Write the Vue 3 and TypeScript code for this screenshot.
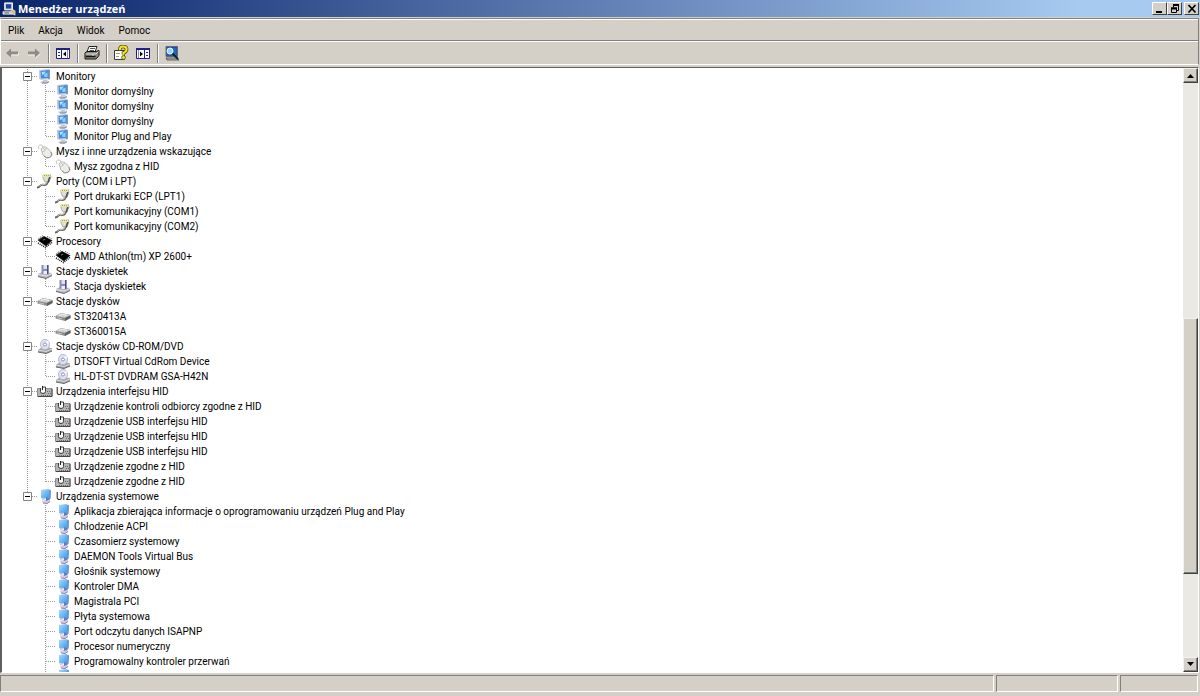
<script setup lang="ts">
import { computed } from 'vue'

type IconName = 'monitor' | 'mouse' | 'port' | 'cpu' | 'floppy' | 'disk' | 'cdrom' | 'hid' | 'system'

interface Category {
  label: string
  icon: IconName
  devices: string[]
  continues?: boolean
}

interface Row {
  label: string
  icon: IconName
  level: number
  rootLine: boolean
  rootEnd: boolean
  lastChild: boolean
}

const categories: Category[] = [
  { label: 'Monitory', icon: 'monitor', devices: ['Monitor domyślny', 'Monitor domyślny', 'Monitor domyślny', 'Monitor Plug and Play'] },
  { label: 'Mysz i inne urządzenia wskazujące', icon: 'mouse', devices: ['Mysz zgodna z HID'] },
  { label: 'Porty (COM i LPT)', icon: 'port', devices: ['Port drukarki ECP (LPT1)', 'Port komunikacyjny (COM1)', 'Port komunikacyjny (COM2)'] },
  { label: 'Procesory', icon: 'cpu', devices: ['AMD Athlon(tm) XP 2600+'] },
  { label: 'Stacje dyskietek', icon: 'floppy', devices: ['Stacja dyskietek'] },
  { label: 'Stacje dysków', icon: 'disk', devices: ['ST320413A', 'ST360015A'] },
  { label: 'Stacje dysków CD-ROM/DVD', icon: 'cdrom', devices: ['DTSOFT Virtual CdRom Device', 'HL-DT-ST DVDRAM GSA-H42N'] },
  {
    label: 'Urządzenia interfejsu HID',
    icon: 'hid',
    devices: [
      'Urządzenie kontroli odbiorcy zgodne z HID',
      'Urządzenie USB interfejsu HID',
      'Urządzenie USB interfejsu HID',
      'Urządzenie USB interfejsu HID',
      'Urządzenie zgodne z HID',
      'Urządzenie zgodne z HID',
    ],
  },
  {
    label: 'Urządzenia systemowe',
    icon: 'system',
    devices: [
      'Aplikacja zbierająca informacje o oprogramowaniu urządzeń Plug and Play',
      'Chłodzenie ACPI',
      'Czasomierz systemowy',
      'DAEMON Tools Virtual Bus',
      'Głośnik systemowy',
      'Kontroler DMA',
      'Magistrala PCI',
      'Płyta systemowa',
      'Port odczytu danych ISAPNP',
      'Procesor numeryczny',
      'Programowalny kontroler przerwań',
      '',
    ],
    continues: true,
  },
]

const rows = computed<Row[]>(() =>
  categories.flatMap((c, ci) => {
    const isLast = ci === categories.length - 1
    return [
      { label: c.label, icon: c.icon, level: 1, rootLine: true, rootEnd: isLast, lastChild: false },
      ...c.devices.map((d, di) => ({
        label: d,
        icon: c.icon,
        level: 2,
        rootLine: !isLast,
        rootEnd: false,
        lastChild: di === c.devices.length - 1 && !c.continues,
      })),
    ]
  }),
)

const menus = ['Plik', 'Akcja', 'Widok', 'Pomoc']
</script>

<template>
  <div class="window">
    <svg class="defs" aria-hidden="true">
      <defs>
        <linearGradient id="screen" x1="0" y1="0" x2="1" y2="1">
          <stop offset="0" stop-color="#a4dcff" />
          <stop offset="1" stop-color="#3c9cf0" />
        </linearGradient>
        <symbol id="i-monitor" viewBox="0 0 16 15">
          <path d="M2 1 L11 0 L13 1 L13 10 L4 11 L2 10Z" fill="#c6cedb" />
          <path d="M11 0.500 L13 1 L13 10 L11 10.500Z" fill="#8698b5" />
          <path d="M3.500 2 L11.500 1 L11.500 9 L4 9.500Z" fill="#3d8ee2" />
          <path d="M4.500 3 L9 2.500 L5.500 6.500Z" fill="#b6e2ff" />
          <path d="M7 5 L10.500 3.500 L10.500 8 L7.500 8Z" fill="#8fcdf8" />
          <path d="M6 11 L10.500 10.500 L10.500 12 L12 13 L10 14.500 L5 14.500 L3 13 L6 12Z" fill="#c5c8d0" />
          <path d="M5 14 H10 L12 12.500" stroke="#7d8496" fill="none" />
        </symbol>
        <symbol id="i-system" viewBox="0 0 16 15">
          <path d="M4 1 L11 0 L14 1 L13.500 9 L6 10 L4 9Z" fill="#a3c6e4" />
          <path d="M4 1.500 L12 0.500 L12 8.500 L4.500 9Z" fill="url(#screen)" />
          <path d="M12 1 L14 1.500 L13.500 10 L12 9Z" fill="#6e94cc" />
          <path d="M9 8 L13 9 L12 12.500 L9 12Z" fill="#5f80bc" />
          <path d="M4.500 11.500 Q8 13 12 11 L13 13 L10 15 L6 14Z" fill="#d3cae4" />
          <path d="M6 14 L10 14.500 L13 12.500" stroke="#9482b8" fill="none" />
          <path d="M5 10.500 L9 11.500" stroke="#dab4c8" fill="none" />
        </symbol>
        <symbol id="i-mouse" viewBox="0 0 16 15">
          <path d="M2 5 Q0 1 4 1 Q6 1 6 3" stroke="#c2c2be" fill="none" />
          <path d="M4 5 Q5 2 9 3 L13 6.500 Q17 11 13 13.500 Q9 15 6 11Z" fill="#ecece8" stroke="#bcbcb7" />
          <path d="M14 8 Q16 11.500 12.500 13.500 Q9.500 15 7 12" stroke="#8d8d89" fill="none" />
          <path d="M5 8 Q8 8 9.500 4 M6 4 L8 6" stroke="#c6c6c0" fill="none" />
        </symbol>
        <symbol id="i-port" viewBox="0 0 16 15">
          <path d="M6 1 L13 0 L14 3 L12 8 L8 8 L6 4Z" fill="#deded5" stroke="#9c9c94" stroke-width=".8" />
          <path d="M5 2.500 L6 0 L13 0 L13.500 2.500 L6 3Z" fill="#e9e7a0" />
          <path d="M7 1.500 H13" stroke="#a4a26c" stroke-dasharray="1 1" />
          <path d="M12 3 L13.500 3 L12 8.500 L10 9Z" fill="#4c4c48" />
          <path d="M10.500 8 Q10 11 7 11 Q4 10.500 3 12 Q2 13.500 0 13.500" stroke="#66665f" stroke-width="2" fill="none" />
          <path d="M10 8 Q9.500 10.500 7 10.500 Q4 10 2.500 12" stroke="#cfcfc6" stroke-width=".9" fill="none" />
        </symbol>
        <symbol id="i-cpu" viewBox="0 0 16 15">
          <path d="M0.500 6 L7 2 L15.500 6.500 L9 12.500Z" fill="#222" />
          <path d="M1 9 L8.500 13.500 L15 8.500" stroke="#111" stroke-width="1.500" stroke-dasharray="1 1" fill="none" />
          <path d="M1.500 4.500 L6 1.500 M10 2.500 L15 5" stroke="#444" stroke-dasharray="1 1" fill="none" />
          <path d="M2 7 L7.500 3 L14 6.500 L9 11Z" fill="#000" />
          <path d="M5.500 6 L7.500 4.700 L8.500 5.200 L6.500 6.600Z" fill="#777" />
        </symbol>
        <symbol id="i-floppy" viewBox="0 0 16 15">
          <path d="M1 10 L5 8 L15 9 L15 11.500 L9 14.500 L1 12.500Z" fill="#b4b4bc" />
          <path d="M1 10.500 L9 12 L15 9.500" stroke="#e5e5ea" fill="none" />
          <path d="M1 12.500 L9 14.500 L15 11.500" stroke="#6c6c74" fill="none" />
          <path d="M4.500 1 H12 V10.500 L4.500 9.500Z" fill="#8c8cbc" />
          <path d="M6.500 1 H10 V5 H6.500Z" fill="#e0e0f0" />
          <path d="M10 1 H11 V10 H10Z" fill="#50507c" />
          <path d="M6.500 7 H10 V10 H6.500Z" fill="#eeeef8" />
        </symbol>
        <symbol id="i-disk" viewBox="0 0 16 15">
          <path d="M0.500 7 L6 4 L15.500 6 V9 L10 12 L0.500 9.500Z" fill="#8c8c8c" />
          <path d="M1 7 L6 4.300 L15 6.300 L10 8.800Z" fill="#d0d0d0" />
          <path d="M4 6.500 L7 5.200 L12 6.400" stroke="#f0f0f0" fill="none" />
          <path d="M10 9 L15.500 6.500 V9 L10 12Z" fill="#606060" />
          <path d="M2 8.800 L7 10" stroke="#c4c4c4" />
        </symbol>
        <symbol id="i-cdrom" viewBox="0 0 16 15">
          <path d="M1 11 L5 8 L15 9 V12 L9 14.500 L1 13Z" fill="#a6a6a6" />
          <path d="M1 11 L9 12.500 L15 10" stroke="#dcdcdc" fill="none" />
          <path d="M1 13 L9 14.500 L15 12" stroke="#686868" fill="none" />
          <ellipse cx="8" cy="5.500" rx="4.500" ry="5.200" fill="#e0e0f4" stroke="#a8a8c4" stroke-width=".8" />
          <path d="M8 5.500 L11 1.500 L12 4Z" fill="#fff" />
          <path d="M8 5.500 L4.500 8 L5.500 10Z" fill="#c6d9ee" />
          <circle cx="8" cy="5.500" r="1.500" fill="#fff" stroke="#8080a8" stroke-width=".8" />
        </symbol>
        <symbol id="i-hid" viewBox="0 0 16 15">
          <path d="M0.500 4.500 H15 V12.500 H0.500Z" fill="#b4b4b4" stroke="#8c8c8c" />
          <path d="M1 12.500 H15 V5" stroke="#484848" fill="none" />
          <path d="M3.500 4 V7.500 Q3.500 9.500 6 9.500 Q8.500 9.500 8.500 7.500 V3 H5" fill="#f4f4f4" stroke="#3c3c3c" />
          <path d="M5.500 2 V6" stroke="#222" />
          <path d="M10 7.500 H14 M11 9.500 H14 M4 11.500 H14" stroke="#6c6c6c" stroke-dasharray="1 1" />
        </symbol>
      </defs>
    </svg>

    <header class="titlebar">
      <svg class="app-icon" viewBox="0 0 16 16" aria-hidden="true">
        <path d="M3 1 H12 V9 H3Z" fill="#d4d0c8" stroke="#fff" />
        <path d="M4.500 2.500 H10.500 V7.500 H4.500Z" fill="#1746a8" />
        <path d="M1 11 H12 V14 H1Z" fill="#d4d0c8" stroke="#fff" stroke-width=".6" />
        <path d="M3 12.500 H8" stroke="#555" />
        <path d="M11 8 L15 10 V15 L10 13Z" fill="#c7c58f" stroke="#eee" stroke-width=".6" />
      </svg>
      <h1>Menedżer urządzeń</h1>
      <div class="captions">
        <button type="button" class="cap" aria-label="Minimalizuj">
          <svg viewBox="0 0 12 10"><path d="M2 8 H8" stroke="#000" stroke-width="2" /></svg>
        </button>
        <button type="button" class="cap" aria-label="Przywróć">
          <svg viewBox="0 0 12 10">
            <path d="M4.500 1 V3.500 M4 1.500 H10 M9.500 1 V6.500 H8" stroke="#000" fill="none" />
            <path d="M4 1 H10" stroke="#000" stroke-width="2" />
            <path d="M2.500 4.500 H7.500 V8.500 H2.500Z M2 4 H8" stroke="#000" fill="none" />
            <path d="M2 4.500 H8" stroke="#000" stroke-width="2" />
          </svg>
        </button>
        <button type="button" class="cap close" aria-label="Zamknij">
          <svg viewBox="0 0 12 10"><path d="M2.500 1 L9.500 8.500 M9.500 1 L2.500 8.500" stroke="#000" stroke-width="1.700" /></svg>
        </button>
      </div>
    </header>

    <div class="bars">
      <nav class="menubar" aria-label="Menu">
        <button v-for="m in menus" :key="m" type="button">{{ m }}</button>
      </nav>
      <div class="toolbar" role="toolbar" aria-label="Pasek narzędzi">
        <button type="button" aria-label="Wstecz">
          <svg viewBox="0 0 16 16"><path d="M2 8 L7 3.500 V6.500 H14 V9.500 H7 V12.500Z" fill="#8e8b84" /><path d="M7.500 10 H14.500 V8" stroke="#f3f1ec" fill="none" /></svg>
        </button>
        <button type="button" aria-label="Dalej">
          <svg viewBox="0 0 16 16"><path d="M14 8 L9 3.500 V6.500 H2 V9.500 H9 V12.500Z" fill="#8e8b84" /><path d="M2 10 H8.500 M9.500 13 L14.500 8.500" stroke="#f3f1ec" fill="none" /></svg>
        </button>
        <span class="sep"></span>
        <button type="button" aria-label="Pokaż lub ukryj drzewo konsoli">
          <svg viewBox="0 0 16 16">
            <path d="M1.500 3.500 H14.500 V13.500 H1.500Z" fill="#fff" stroke="#20208a" />
            <path d="M1 4 H15" stroke="#20208a" stroke-width="2" />
            <path d="M6.500 5 V13" stroke="#20208a" />
            <path d="M3 7.500 H5 M3 10.500 H5" stroke="#20208a" />
            <path d="M8 9 L11 6.500 V11.500Z" fill="#000" />
            <path d="M12.500 5 V13" stroke="#8888c4" />
          </svg>
        </button>
        <span class="sep"></span>
        <button type="button" aria-label="Drukuj">
          <svg viewBox="0 0 16 16">
            <path d="M5 1.500 H13 L11 7 H3Z" fill="#fff" stroke="#222" />
            <path d="M6 3.500 H11 M5.500 5.500 H10" stroke="#555" />
            <path d="M1 8 L3 6.500 H12 L15 5.500 V10.500 L12 14 H1Z" fill="#8b8980" stroke="#111" />
            <path d="M1.500 9 H12 L14.500 6.500" stroke="#dedbd2" fill="none" />
            <path d="M2 11.500 H11.500" stroke="#111" stroke-width="1.500" />
            <path d="M8 10 H10" stroke="#dedbd2" />
          </svg>
        </button>
        <span class="sep"></span>
        <button type="button" aria-label="Pomoc">
          <svg viewBox="0 0 16 16">
            <path d="M1.500 5.500 H11.500 V14.500 H1.500Z" fill="#fff" stroke="#3a3a3a" />
            <path d="M3 8.500 H7 M3 11.500 H6" stroke="#999" />
            <path d="M7 5 Q6.500 1.500 10 1.500 Q14 1.500 13.500 5 Q13 7 10.500 8 V9.500" stroke="#4a4700" stroke-width="3.600" fill="none" />
            <path d="M7 5 Q6.500 1.500 10 1.500 Q14 1.500 13.500 5 Q13 7 10.500 8 V9.500" stroke="#f6ea25" stroke-width="2.200" fill="none" />
            <circle cx="10.500" cy="12.500" r="1.900" fill="#f6ea25" stroke="#4a4700" stroke-width=".8" />
          </svg>
        </button>
        <button type="button" aria-label="Pokaż lub ukryj okienko akcji">
          <svg viewBox="0 0 16 16">
            <path d="M1.500 3.500 H14.500 V13.500 H1.500Z" fill="#fff" stroke="#20208a" />
            <path d="M1 4 H15" stroke="#20208a" stroke-width="2" />
            <path d="M9.500 5 V13" stroke="#20208a" />
            <path d="M11 7.500 H13 M11 10.500 H13" stroke="#20208a" />
            <path d="M8 9 L5 6.500 V11.500Z" fill="#000" />
            <path d="M3.500 5 V13" stroke="#8888c4" />
          </svg>
        </button>
        <span class="sep"></span>
        <button type="button" aria-label="Skanuj w poszukiwaniu zmian sprzętu">
          <svg viewBox="0 0 16 16">
            <path d="M2 1.500 H13.500 V11.500 H2Z" fill="#1d4fa0" stroke="#667" />
            <path d="M3 3 H12.500 V10.500 H3Z" fill="#1f66bc" />
            <path d="M2 13 H12 L15 15 H3Z" fill="#b4b4ac" stroke="#333" stroke-width=".7" />
            <circle cx="6" cy="6" r="3" fill="#8fd6ee" stroke="#e8f6fa" />
            <path d="M8.500 8.500 L14 14" stroke="#123" stroke-width="2" />
          </svg>
        </button>
      </div>
    </div>

    <main class="client">
      <ul class="tree" role="tree" aria-label="Urządzenia">
        <li v-for="(r, i) in rows" :key="i" role="treeitem" :aria-level="r.level">
          <svg class="guide" viewBox="0 0 18 15" aria-hidden="true">
            <g stroke="#9a9a9a" stroke-dasharray="1 1" fill="none">
              <path v-if="r.rootLine" :d="r.rootEnd ? 'M8.5 0 V8' : 'M8.5 0 V15'" :stroke-dashoffset="i % 2" />
              <path v-if="r.level === 1" d="M13 7.5 H18" />
            </g>
            <g v-if="r.level === 1">
              <path d="M4.500 3.500 H12.500 V11.500 H4.500Z" fill="#fff" stroke="#848484" />
              <path d="M6 7.500 H11" stroke="#000" />
            </g>
          </svg>
          <svg v-if="r.level === 2" class="guide" viewBox="0 0 18 15" aria-hidden="true">
            <g stroke="#9a9a9a" stroke-dasharray="1 1" fill="none">
              <path :d="r.lastChild ? 'M8.5 0 V8' : 'M8.5 0 V15'" :stroke-dashoffset="i % 2" />
              <path d="M9 7.5 H18" />
            </g>
          </svg>
          <svg class="icon" aria-hidden="true"><use :href="'#i-' + r.icon" /></svg>
          <span v-if="r.label" class="label">{{ r.label }}</span>
        </li>
      </ul>
      <div class="scrollbar" aria-hidden="true">
        <button type="button" class="arrow" tabindex="-1">
          <svg viewBox="0 0 7 4"><path d="M0 4 L3.500 0 L7 4Z" /></svg>
        </button>
        <span class="before"></span>
        <span class="thumb"></span>
        <span class="after"></span>
        <button type="button" class="arrow" tabindex="-1">
          <svg viewBox="0 0 7 4"><path d="M0 0 L3.500 4 L7 0Z" /></svg>
        </button>
      </div>
    </main>

    <footer class="status">
      <span class="pane wide"></span>
      <span class="pane mid"></span>
      <span class="pane small"></span>
    </footer>
  </div>
</template>

<style>
body {
  background: #d4d0c8;
}
</style>

<style scoped>
.window {
  display: flex;
  flex-direction: column;
  height: 100vh;
  background: #d4d0c8;
  color: #000;
  font: 10px/15px Roboto, "Liberation Sans", sans-serif;
  overflow: hidden;
}
.defs {
  position: absolute;
  width: 0;
  height: 0;
}
button {
  font: inherit;
  color: inherit;
  border: 0;
  padding: 0;
  margin: 0;
  background: transparent;
  display: flex;
  align-items: center;
  justify-content: center;
}
.titlebar {
  display: flex;
  align-items: center;
  gap: 2px;
  height: 17px;
  padding: 0 1px 0 2px;
  background: linear-gradient(to right, #0a246a, #a6caf0 90%);
  color: #fff;
}
.app-icon {
  width: 14px;
  height: 14px;
}
h1 {
  flex: 1;
  margin: 0;
  font: bold 11px/16px "Open Sans", "Noto Sans", sans-serif;
}
.captions {
  display: flex;
}
.cap {
  width: 15px;
  height: 13px;
  background: #d4d0c8;
  border: 1px solid;
  border-color: #fff #404040 #404040 #fff;
  box-sizing: border-box;
}
.cap svg {
  width: 12px;
  height: 10px;
}
.close {
  margin-left: 2px;
}
.bars {
  margin: 1px 1px 0 0;
  border: 1px solid #808080;
  border-bottom-color: #fff;
  border-left-color: #fff;
}
.menubar {
  display: flex;
  height: 22px;
  padding-top: 1px;
  border-top: 1px solid #fff;
  border-bottom: 1px solid #808080;
  box-sizing: border-box;
}
.menubar button {
  padding: 0 7px;
}
.toolbar {
  display: flex;
  align-items: center;
  height: 23px;
  border-top: 1px solid #fff;
  box-sizing: border-box;
}
.toolbar button {
  width: 22px;
  height: 20px;
}
.toolbar svg {
  width: 16px;
  height: 16px;
}
.sep {
  width: 1px;
  height: 19px;
  margin: 0 2px 0 3px;
  border-left: 1px solid #808080;
  background: #fff;
}
.client {
  flex: 1;
  min-height: 0;
  display: flex;
  margin: 2px 1px 0 0;
  border: 1px solid #808080;
  border-top: 1px solid #606060;
  border-right-color: #fff;
  border-bottom-color: #fff;
  border-left: 2px solid #606060;
  background: #fff;
}
.tree {
  flex: 1;
  min-width: 0;
  margin: 0;
  padding: 1px 0 0 17px;
  list-style: none;
  overflow: hidden;
}
li {
  display: flex;
  height: 15px;
  white-space: nowrap;
}
.guide {
  width: 18px;
  height: 15px;
  flex: none;
}
.icon {
  width: 16px;
  height: 15px;
  flex: none;
}
.label {
  padding: 0 3px;
}
.scrollbar {
  display: flex;
  flex-direction: column;
  width: 15px;
  background: #ebe9e4;
}
.arrow,
.thumb {
  background: #d4d0c8;
  border: 1px solid;
  border-color: #f4f2ee #404040 #404040 #f4f2ee;
  box-shadow: inset -1px -1px #808080;
  box-sizing: border-box;
}
.arrow {
  height: 15px;
  flex: none;
}
.arrow svg {
  width: 7px;
  height: 4px;
}
.before {
  flex: 236 0 0;
}
.thumb {
  flex: 255 0 0;
}
.after {
  flex: 83 0 0;
}
.status {
  display: flex;
  gap: 2px;
  height: 17px;
  padding: 2px 2px 4px 0;
}
.pane {
  border: 1px solid;
  border-color: #808080 #fff #fff #808080;
}
.wide {
  flex: 1;
}
.mid {
  width: 120px;
}
.small {
  width: 76px;
}
</style>
